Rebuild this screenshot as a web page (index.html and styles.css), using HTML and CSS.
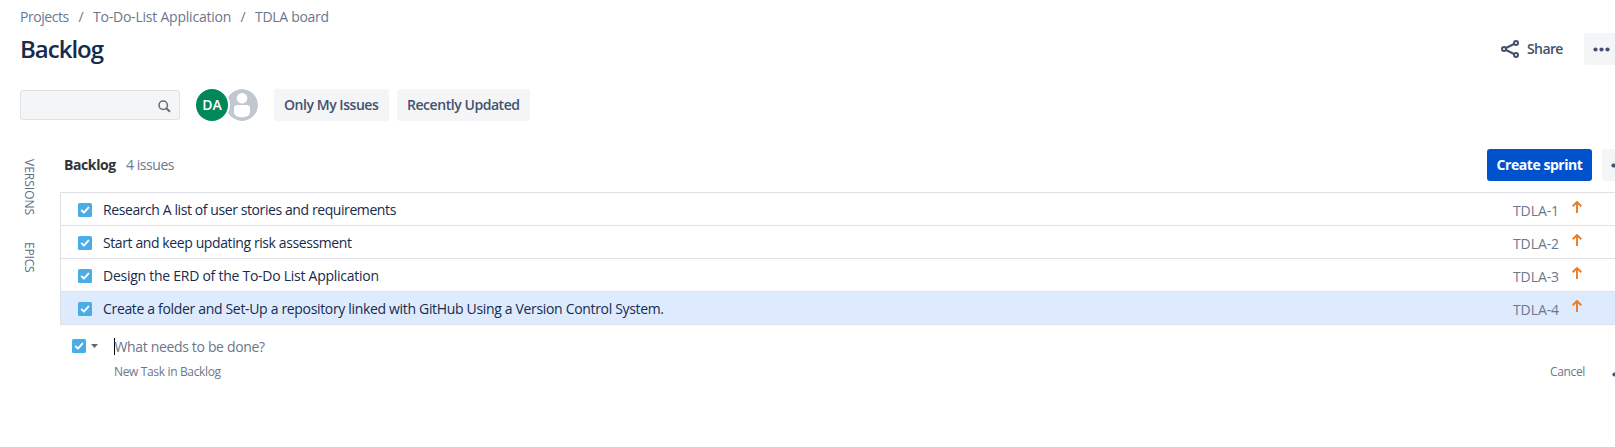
FILE: index.html
```html
<!DOCTYPE html>
<html lang="en">
<head>
<meta charset="utf-8">
<title>Backlog</title>
<link rel="stylesheet" href="styles.css">
</head>
<body>
<svg class="defs" width="0" height="0">
  <symbol id="task" viewBox="0 0 14 14"><rect width="14" height="14" rx="1.5" fill="#4bade8"/><path d="M3.7 7.4l2.2 2.2 4.5-5" fill="none" stroke="#fff" stroke-width="1.9" stroke-linecap="round" stroke-linejoin="round"/></symbol>
  <symbol id="up" viewBox="0 0 10 12"><path d="M5 12V1.2M.7 5.2L5 1l4.3 4.2" fill="none" stroke="#ea7d24" stroke-width="1.9"/></symbol>
</svg>
<div class="page">
  <nav class="crumbs"><span class="c1">Projects</span><i>/</i><span class="c2">To-Do-List Application</span><i>/</i><span class="c3">TDLA board</span></nav>
  <header class="head">
    <h1>Backlog</h1>
    <button class="share"><svg width="18" height="18" viewBox="0 0 18 18" fill="none" stroke="#42526e" stroke-width="2"><path d="M5 8l8-4M5 10l8 4"/><circle cx="3" cy="9" r="2"/><circle cx="15" cy="3" r="2"/><circle cx="15" cy="15" r="2"/></svg><span>Share</span></button>
    <button class="more"><svg width="17" height="5" viewBox="0 0 17 5" fill="#42526e"><circle cx="2.5" cy="2.5" r="2.1"/><circle cx="8.5" cy="2.5" r="2.1"/><circle cx="14.5" cy="2.5" r="2.1"/></svg></button>
  </header>
  <div class="filters">
    <div class="search"><svg width="13" height="13" viewBox="0 0 13 13" fill="none" stroke="#6b6b6b"><circle cx="5.2" cy="5.2" r="4.2" stroke-width="1.5"/><path d="M8.3 8.3l3.6 3.4" stroke-width="2.1"/></svg></div>
    <div class="avatars">
      <span class="avatar da">DA</span>
      <svg class="avatar anon" width="32" height="32" viewBox="0 0 32 32"><circle cx="16" cy="16" r="16" fill="#c1c7d0"/><circle cx="16" cy="9.3" r="5.3" fill="#fff"/><path d="M8 19.5a3.4 3.4 0 0 1 3.4-3.4h9.2a3.4 3.4 0 0 1 3.4 3.4v3.7c0 3.2-3.6 5.1-8 5.1s-8-1.900-8-5.100z" fill="#fff"/></svg>
    </div>
    <button class="filter f1"><span>Only My Issues</span></button>
    <button class="filter f2"><span>Recently Updated</span></button>
  </div>
  <main class="board">
    <aside class="tabs"><span class="versions">VERSIONS</span><span class="epics">EPICS</span></aside>
    <section class="backlog">
      <div class="bar"><h2>Backlog</h2><span class="count">4 issues</span><button class="sprint"><span>Create sprint</span></button><button class="more small"><svg width="17" height="5" viewBox="0 0 17 5" fill="#42526e"><circle cx="2.5" cy="2.500" r="2.1"/><circle cx="8.5" cy="2.5" r="2.1"/></svg></button></div>
      <ul class="issues">
        <li><svg class="task"><use href="#task"/></svg><span class="title t1">Research A list of user stories and requirements</span><span class="key">TDLA-1</span><svg class="up"><use href="#up"/></svg></li>
        <li><svg class="task"><use href="#task"/></svg><span class="title t2">Start and keep updating risk assessment</span><span class="key">TDLA-2</span><svg class="up"><use href="#up"/></svg></li>
        <li><svg class="task"><use href="#task"/></svg><span class="title t3">Design the ERD of the To-Do List Application</span><span class="key">TDLA-3</span><svg class="up"><use href="#up"/></svg></li>
        <li class="selected"><svg class="task"><use href="#task"/></svg><span class="title t4">Create a folder and Set-Up a repository linked with GitHub Using a Version Control System.</span><span class="key">TDLA-4</span><svg class="up"><use href="#up"/></svg></li>
      </ul>
      <div class="create"><svg class="task"><use href="#task"/></svg><svg class="caret" width="7" height="4" viewBox="0 0 7 4"><path d="M0 0h7L3.500 4z" fill="#666"/></svg><span class="field">What needs to be done?</span></div>
      <div class="hint"><span class="where">New Task in Backlog</span><span class="cancel">Cancel</span><svg width="17" height="5" viewBox="0 0 17 5" fill="#42526e"><circle cx="2.5" cy="2.5" r="2.1"/></svg></div>
    </section>
  </main>
</div>
</body>
</html>
```
FILE: styles.css
```css
* { box-sizing: border-box; }
body { margin: 0; background: #fff; font: 14px/20px "Open Sans", "Noto Sans", sans-serif; color: #172b4d; overflow: hidden; }
.defs { position: absolute; }
.page { width: 1615px; height: 447px; overflow: hidden; white-space: nowrap; }
svg { display: block; flex: none; }
button { border: 0; padding: 0; background: none; font: inherit; display: flex; align-items: center; flex: none; }
h1, h2, ul { margin: 0; padding: 0; }

.crumbs { display: flex; padding: 7px 0 0 20px; height: 33px; color: #6b778c; }
.crumbs i { font-style: normal; width: 24px; text-align: center; }
.c1 { width: 49px; letter-spacing: -0.45px; }
.c2 { width: 138px; letter-spacing: -0.22px; }
.c3 { letter-spacing: -0.3px; }

.head { display: flex; align-items: center; height: 32px; padding-left: 20px; }
h1 { font-size: 24px; line-height: 28px; font-weight: 600; letter-spacing: -1px; flex: 1; padding-bottom: 1px; }
.share { width: 83px; gap: 8px; color: #42526e; font-weight: 600; letter-spacing: -0.6px; }
.more { width: 60px; height: 32px; padding-left: 9px; border-radius: 3px; background: #f4f5f7; margin-right: -29px; }

.filters { display: flex; align-items: center; margin-top: 24px; height: 32px; padding-left: 20px; }
.search { width: 160px; height: 30px; border: 1px solid #dfe1e6; border-radius: 3px; background: #f4f5f7; display: flex; justify-content: flex-end; align-items: center; padding: 2px 8px 0 0; }
.avatars { display: flex; margin: 0 16px; }
.avatar { width: 32px; height: 32px; border-radius: 50%; }
.da { background: #00875a; color: #fff; font-weight: 600; text-align: center; line-height: 32px; z-index: 1; box-shadow: 0 0 0 2px #fff; }
.anon { margin-left: -2px; }
.filter { height: 32px; padding-left: 10px; border-radius: 3px; background: #f4f5f7; color: #42526e; font-weight: 600; }
.f1 { width: 115px; margin-right: 8px; letter-spacing: -0.45px; }
.f2 { width: 133px; letter-spacing: -0.45px; }

.board { display: flex; margin-top: 28px; }
.tabs { width: 60px; padding: 10px 0 0 19px; font-size: 12px; color: #5e6c84; display: flex; flex-direction: column; align-items: flex-start; }
.tabs span { writing-mode: vertical-rl; line-height: 20px; }
.versions { height: 83px; }
.epics { letter-spacing: -0.2px; }
.backlog { flex: 1; min-width: 0; }
.bar { display: flex; align-items: center; height: 43px; padding: 0 0 11px 4px; }
h2 { font-size: 14px; line-height: 20px; font-weight: 700; color: #333; width: 62px; letter-spacing: -0.4px; }
.count { flex: 1; color: #6b778c; letter-spacing: -0.45px; }
.sprint { width: 105px; height: 32px; justify-content: center; border-radius: 3px; background: #0052cc; color: #fff; font-weight: 700; margin-right: 10px; letter-spacing: -0.45px; }
.small { width: 42px; }

.issues { list-style: none; border: 1px solid #dfe1e6; border-width: 1px 0 0 1px; }
.issues li { display: flex; align-items: flex-start; height: 33px; border-bottom: 1px solid #dfe1e6; padding: 0 33px 0 17px; }
.issues .selected { background: #deebff; }
.task { width: 14px; height: 14px; }
.issues .task { margin-top: 10px; }
.title { flex: 1; margin: 8px 0 0 11px; line-height: 18px; }
.t1 { letter-spacing: -0.41px; }
.t2 { letter-spacing: -0.4px; }
.t3 { letter-spacing: -0.26px; }
.t4 { letter-spacing: -0.33px; }
.key { width: 59px; margin-top: 8px; color: #6b778c; letter-spacing: -0.1px; }
.up { width: 10px; height: 12px; margin-top: 8px; }

.create { display: flex; align-items: center; height: 34px; margin-top: 4px; padding-left: 12px; }
.caret { margin: 0 16px 0 5px; }
.field { border-left: 1px solid #000; color: #6b778c; line-height: 16px; padding-top: 1px; letter-spacing: -0.34px; text-indent: -0.5px; }
.hint { display: flex; align-items: center; font-size: 12px; color: #6b778c; padding-left: 54px; line-height: 18px; letter-spacing: -0.35px; }
.where { flex: 1; }
.cancel { width: 62px; }
.hint svg { margin: 5px -14px 0 0; }
```
